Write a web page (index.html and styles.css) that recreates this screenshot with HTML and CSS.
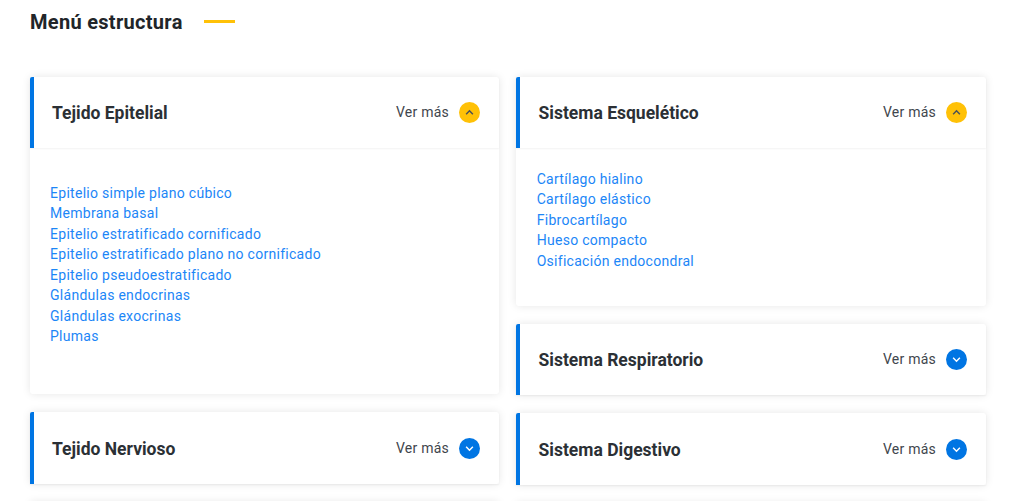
FILE: index.html
```html
<!DOCTYPE html>
<html lang="es">
<head>
  <meta charset="UTF-8" />
  <title>Menú estructura</title>
  <link rel="stylesheet" href="styles.css">
</head>
<body>
  <div class="section-title">
    <h2>Menú estructura</h2>
    <span class="title-line"></span>
  </div>

  <div class="menu-grid">
    <div class="menu-col">
      <div class="card">
        <div class="card-head">
          <h3>Tejido Epitelial</h3>
          <span class="more">Ver más</span>
          <span class="toggle open"><svg viewBox="0 0 10 10"><path d="M3.4 5.8 L5 4.2 L6.6 5.8"/></svg></span>
        </div>
        <div class="card-body tall">
          <a href="#">Epitelio simple plano cúbico</a>
          <a href="#">Membrana basal</a>
          <a href="#">Epitelio estratificado cornificado</a>
          <a href="#">Epitelio estratificado plano no cornificado</a>
          <a href="#">Epitelio pseudoestratificado</a>
          <a href="#">Glándulas endocrinas</a>
          <a href="#">Glándulas exocrinas</a>
          <a href="#">Plumas</a>
        </div>
      </div>
      <div class="card">
        <div class="card-head">
          <h3>Tejido Nervioso</h3>
          <span class="more">Ver más</span>
          <span class="toggle"><svg viewBox="0 0 10 10"><path d="M3.4 4.2 L5 5.8 L6.6 4.2"/></svg></span>
        </div>
      </div>
      <div class="card">
        <div class="card-head"></div>
      </div>
    </div>

    <div class="menu-col right">
      <div class="card">
        <div class="card-head">
          <h3>Sistema Esquelético</h3>
          <span class="more">Ver más</span>
          <span class="toggle open"><svg viewBox="0 0 10 10"><path d="M3.4 5.8 L5 4.2 L6.6 5.8"/></svg></span>
        </div>
        <div class="card-body">
          <a href="#">Cartílago hialino</a>
          <a href="#">Cartílago elástico</a>
          <a href="#">Fibrocartílago</a>
          <a href="#">Hueso compacto</a>
          <a href="#">Osificación endocondral</a>
        </div>
      </div>
      <div class="card">
        <div class="card-head">
          <h3>Sistema Respiratorio</h3>
          <span class="more">Ver más</span>
          <span class="toggle"><svg viewBox="0 0 10 10"><path d="M3.4 4.2 L5 5.8 L6.6 4.2"/></svg></span>
        </div>
      </div>
      <div class="card">
        <div class="card-head">
          <h3>Sistema Digestivo</h3>
          <span class="more">Ver más</span>
          <span class="toggle"><svg viewBox="0 0 10 10"><path d="M3.4 4.2 L5 5.8 L6.6 4.2"/></svg></span>
        </div>
      </div>
      <div class="card">
        <div class="card-head"></div>
      </div>
    </div>
  </div>
</body>
</html>
```

FILE: styles.css
```css
html, body {
  height: 100%;
  overflow: hidden;
}

body {
  margin: 0;
  padding: 0 38px 0 30px;
  font-family: 'Roboto', sans-serif;
  background: #fff;
  color: #212529;
}

.section-title {
  display: flex;
  align-items: center;
  height: 43px;
  margin-bottom: 33.7px;
}

.section-title h2 {
  margin: 0;
  font-size: 20px;
  font-weight: 700;
  letter-spacing: 0.3px;
}

.title-line {
  width: 31px;
  height: 3px;
  margin-left: 21px;
  margin-top: -1px;
  background: #ffc107;
}

.menu-grid {
  display: grid;
  grid-template-columns: 469px 470px;
  gap: 17px;
}

.menu-col {
  display: flex;
  flex-direction: column;
  gap: 18px;
}

.card {
  background: #fff;
  border-radius: 3px;
  box-shadow: 0 0 8px rgba(0, 0, 0, 0.1);
}

.card-head {
  display: flex;
  align-items: center;
  height: 71.6px;
  padding: 0 19px 0 18px;
  border-left: 4px solid #0075e3;
  border-radius: 2px 3px 0 0;
  box-shadow: 0 1px 2px rgba(0, 0, 0, 0.05);
}

.right .card-head {
  padding-left: 18.5px;
}

.card-head h3 {
  flex: 1;
  margin: 1px 0 0;
  font-size: 17.5px;
  font-weight: 700;
  color: #2b3035;
}

.more {
  font-size: 14px;
  letter-spacing: 0.25px;
  color: #3f464d;
}

.toggle {
  display: flex;
  width: 21px;
  height: 21px;
  margin-left: 10px;
  border-radius: 50%;
  background: #0075e3;
}

.toggle svg {
  width: 21px;
  height: 21px;
  fill: none;
  stroke: #fff;
  stroke-width: 0.7;
}

.toggle.open {
  background: #ffc107;
}

.toggle.open svg {
  stroke: #495057;
}

.card-body {
  display: flex;
  flex-direction: column;
  padding: 20.7px 20px 26px;
  height: 157.4px;
  box-sizing: border-box;
}

.right .card-body {
  padding-left: 20.7px;
}

.card-body.tall {
  height: 246px;
  padding-top: 34.7px;
}

.card-body a {
  font-size: 14px;
  line-height: 20.5px;
  letter-spacing: 0.28px;
  color: #1c86f7;
  text-decoration: none;
}
```
